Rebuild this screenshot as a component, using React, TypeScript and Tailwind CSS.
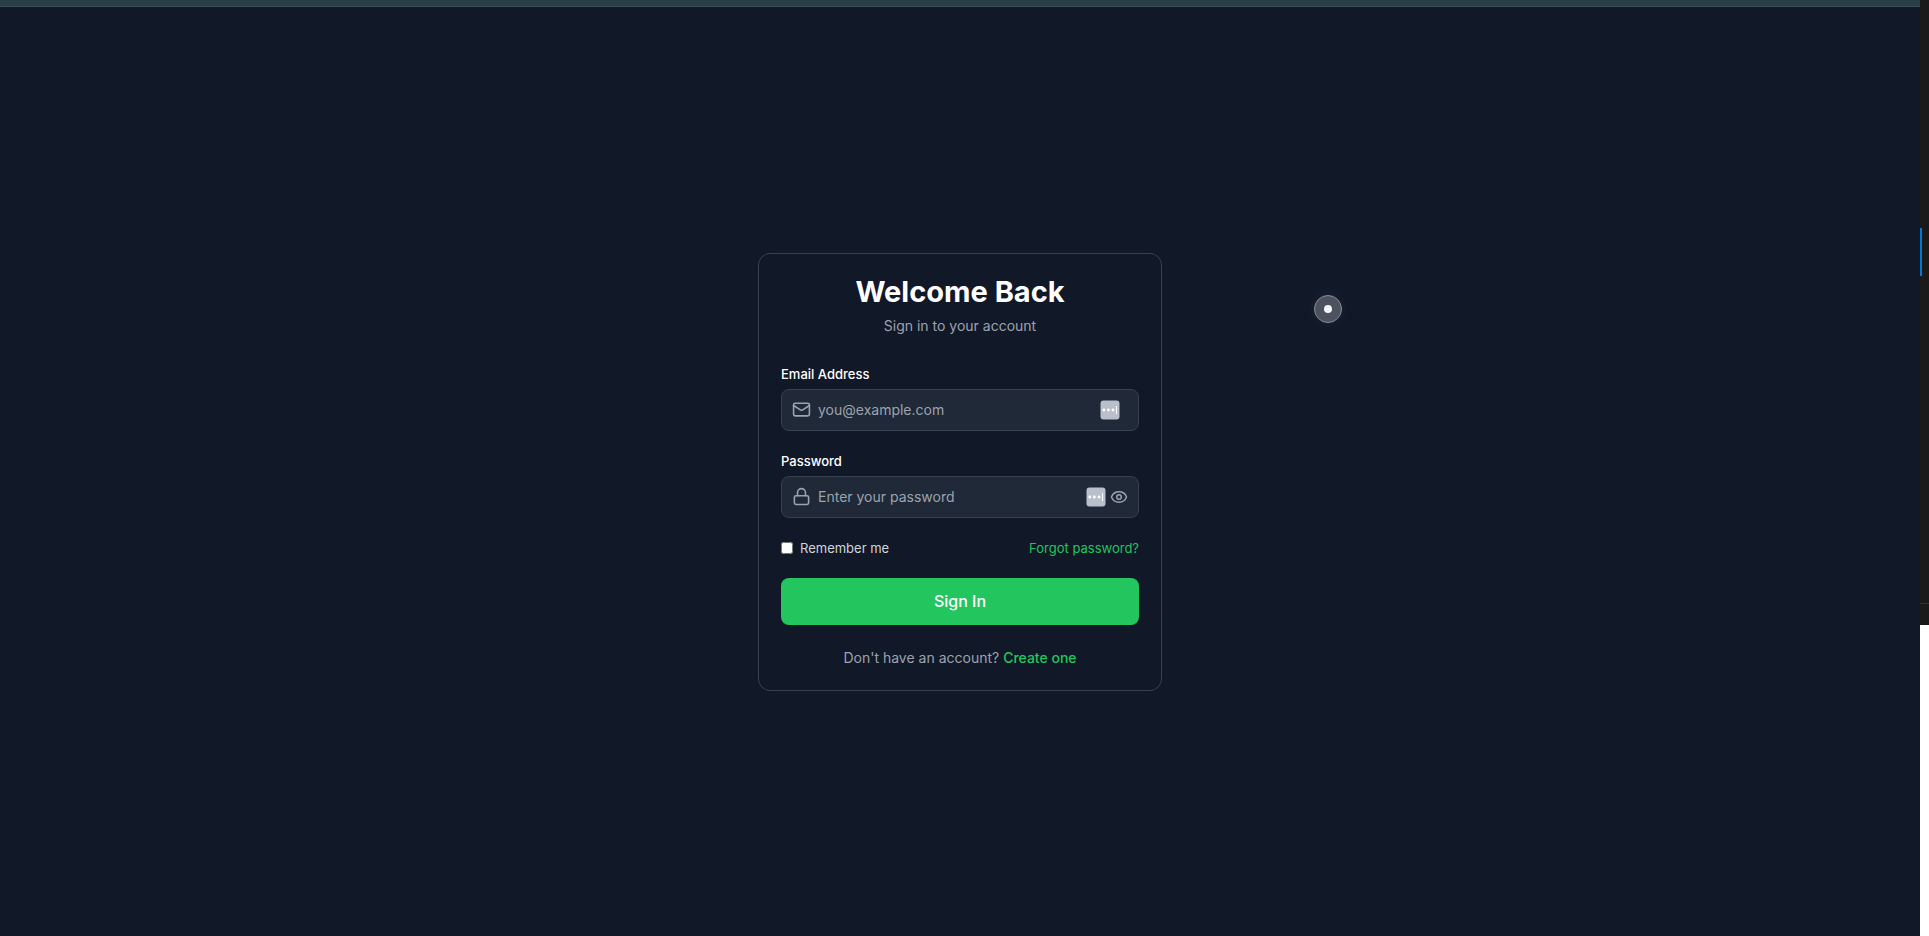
import React, { useState } from 'react';
import { Eye, EyeOff, Lock, Mail } from 'lucide-react';

const inputClass =
  'h-[42px] w-full rounded-lg border border-[#374151] bg-[#1f2937] pl-9 text-sm text-white placeholder:text-[#9ca3af] outline-none focus:border-[#22c55e]';

const labelClass = 'mb-[5px] block text-[13px] leading-5 font-medium text-white';

const iconClass = 'absolute inset-y-0 left-[11px] my-auto size-[19px] text-[#9ca3af]';

const AutofillButton: React.FC<{ label: string }> = ({ label }) => (
  <button type="button" aria-label={label} className="size-5">
    <svg viewBox="0 0 20 20" className="size-5">
      <rect x="0.5" y="0.5" width="19" height="19" rx="3" fill="#bac0cb" />
      <circle cx="3.8" cy="10" r="1.4" fill="#fff" />
      <circle cx="8.4" cy="10" r="1.4" fill="#fff" />
      <circle cx="13" cy="10" r="1.4" fill="#fff" />
      <path d="M16.5 6v8" stroke="#fff" strokeWidth="1" />
    </svg>
  </button>
);

const SidePanel: React.FC = () => (
  <aside className="flex w-[9px] shrink-0 flex-col bg-white">
    <div className="flex h-[625px] flex-col bg-[#1a1a1a] pt-[228px]">
      <div className="h-12 w-0.5 bg-[#0078d4]" />
      <div className="mt-[327px] h-px bg-[#333333]" />
    </div>
  </aside>
);

const App: React.FC = () => {
  const [showPassword, setShowPassword] = useState(false);

  return (
    <div className="relative flex min-h-screen bg-[#111827] font-['Inter',sans-serif]">
      <div className="flex flex-1 flex-col">
        <div className="h-[7px] border-b border-[#3c4f50] bg-[#284045]" />

        <main className="flex flex-1 items-center justify-center">
          <div className="w-full max-w-[404px] rounded-xl border border-[#374151] p-[22px]">
            {/* Header */}
            <div className="mb-7 text-center">
              <h1 className="mb-2 text-[29px] leading-8 font-bold text-white">Welcome Back</h1>
              <p className="text-sm text-[#9ca3af]">Sign in to your account</p>
            </div>

            <form className="flex flex-col gap-5" onSubmit={(e) => e.preventDefault()}>
              <div>
                <label htmlFor="email" className={labelClass}>
                  Email Address
                </label>
                <div className="relative">
                  <Mail className={iconClass} />
                  <input id="email" type="email" placeholder="you@example.com" className={`${inputClass} pr-12`} />
                  <div className="absolute inset-y-0 right-[19px] flex items-center">
                    <AutofillButton label="Autofill email" />
                  </div>
                </div>
              </div>

              <div>
                <label htmlFor="password" className={labelClass}>
                  Password
                </label>
                <div className="relative">
                  <Lock className={iconClass} />
                  <input
                    id="password"
                    type={showPassword ? 'text' : 'password'}
                    placeholder="Enter your password"
                    className={`${inputClass} pr-16`}
                  />
                  <div className="absolute inset-y-0 right-[11px] flex items-center gap-1">
                    <AutofillButton label="Autofill password" />
                    <button
                      type="button"
                      aria-label={showPassword ? 'Hide password' : 'Show password'}
                      onClick={() => setShowPassword(!showPassword)}
                      className="text-[#9ca3af]"
                    >
                      {showPassword ? <EyeOff className="size-[18px]" /> : <Eye className="size-[18px]" />}
                    </button>
                  </div>
                </div>
              </div>

              <div className="flex items-center justify-between text-[13px] leading-5">
                <label htmlFor="remember" className="flex items-center text-[#d1d5db]">
                  <input id="remember" type="checkbox" className="mr-[7px] size-3" />
                  Remember me
                </label>
                <a href="#forgot" className="text-[#22c55e]">
                  Forgot password?
                </a>
              </div>

              <button type="submit" className="h-[47px] rounded-lg bg-[#22c55e] text-base font-medium text-white">
                Sign In
              </button>
            </form>

            <p className="mt-[23px] text-center text-sm text-[#9ca3af]">
              Don't have an account?{' '}
              <a href="#register" className="font-medium text-[#22c55e]">
                Create one
              </a>
            </p>
          </div>
        </main>
      </div>

      <SidePanel />

      {/* Pointer marker */}
      <div className="pointer-events-none absolute top-[295px] left-[1314px] flex size-7 items-center justify-center rounded-full border border-[#868b95] bg-[#4d525e] shadow-[0_0_12px_rgba(255,255,255,0.06)]">
        <div className="size-2 rounded-full bg-[#f5f6f7]" />
      </div>
    </div>
  );
};

export default App;
